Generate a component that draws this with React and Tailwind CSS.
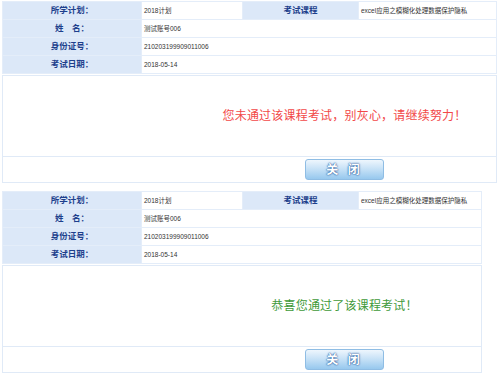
import React from "react";

const rows = [
  { label: "所学计划：", value: "2018计划", extra: true },
  { label: "姓　名：", value: "测试账号006" },
  { label: "身份证号：", value: "210203199909011006" },
  { label: "考试日期：", value: "2018-05-14" },
];

const labelCls =
  "h-[17px] bg-[#dce8f8] flex items-center justify-center text-[8.5px] font-bold text-[#1d3f8c]";
const valueCls = "h-[17px] bg-white flex items-center pl-[2px] text-[6.5px] text-[#333]";

const ResultPanel = ({ width, pad, message, color }) => (
  <div className={width}>
    <div className="grid grid-cols-[138px_100px_115px_1fr] gap-px bg-[#e4edf9] p-px">
      {rows.map((r) =>
        r.extra ? (
          <React.Fragment key={r.label}>
            <div className={labelCls}>{r.label}</div>
            <div className={valueCls}>{r.value}</div>
            <div className={labelCls}>考试课程</div>
            <div className={valueCls}>excel应用之模糊化处理数据保护隐私</div>
          </React.Fragment>
        ) : (
          <React.Fragment key={r.label}>
            <div className={labelCls}>{r.label}</div>
            <div className={`${valueCls} col-span-3`}>{r.value}</div>
          </React.Fragment>
        )
      )}
    </div>
    <div className="mt-px border border-[#e0eaf7] bg-white">
      <div className={`h-[80px] flex items-center justify-center ${pad}`}>
        <span className={`text-[12px] tracking-[0.2px] ${color}`}>{message}</span>
      </div>
      <div className={`h-[26px] border-t border-[#e0eaf7] flex items-center justify-center ${pad}`}>
        <button className="w-[79px] h-[21px] rounded-[3px] border border-[#8fbde4] bg-gradient-to-b from-[#eef6fd] via-[#c4e0f6] to-[#97c8ee] text-[12px] font-bold text-white tracking-[3px] [text-shadow:0_0_2px_#1b4f96,0_0_1px_#1b4f96]">
          关 闭
        </button>
      </div>
    </div>
  </div>
);

export default function App() {
  return (
    <div
      className="w-[500px] h-[389px] overflow-hidden bg-white pl-[2px] pt-px"
      style={{ fontFamily: '"Liberation Sans", "Noto Sans CJK SC", sans-serif' }}
    >
      <ResultPanel
        width="w-[495px]"
        pad="pl-[190px]"
        message="您未通过该课程考试，别灰心，请继续努力！"
        color="text-[#f24848]"
      />
      <div className="h-[8px]" />
      <ResultPanel
        width="w-[480px]"
        pad="pl-[205px]"
        message="恭喜您通过了该课程考试！"
        color="text-[#3f9a3a]"
      />
    </div>
  );
}
